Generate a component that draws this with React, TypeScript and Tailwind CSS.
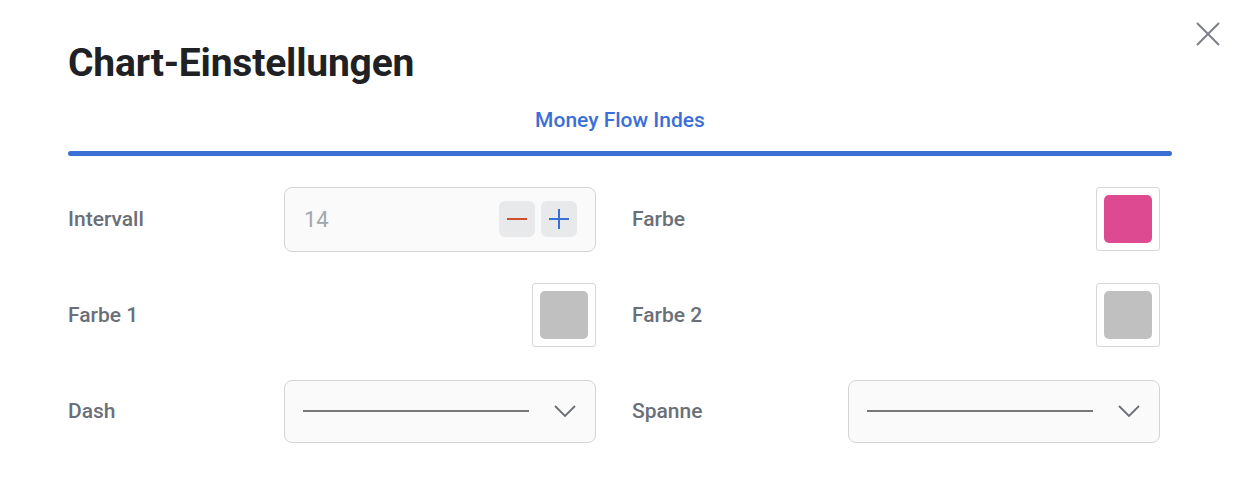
import React from "react";

const font = { fontFamily: "Roboto, 'Noto Sans', sans-serif" };

function Label({ children }: { children: React.ReactNode }) {
  return <span className="text-[21px] font-medium text-[#6b6f78] leading-none">{children}</span>;
}

function Swatch({ color }: { color: string }) {
  return (
    <div className="w-16 h-16 border border-[#d6d6d6] rounded-[3px] bg-white flex items-center justify-center">
      <div className="w-12 h-12 rounded-[5px]" style={{ background: color }} />
    </div>
  );
}

function LineSelect() {
  return (
    <div className="w-[312px] h-[63px] rounded-lg border border-[#d3d4d8] bg-[#fafafa] flex items-center pl-[18px] pr-[19px]">
      <div className="w-[226px] h-[2px] bg-[#777]" />
      <div className="flex-1" />
      <svg width="22" height="14" viewBox="0 0 22 14" fill="none">
        <path d="M1 2l10 10L21 2" stroke="#6b6f78" strokeWidth="1.8" />
      </svg>
    </div>
  );
}

export default function App() {
  return (
    <div className="w-[1242px] h-[498px] bg-white relative" style={font}>
      <button className="absolute left-[1196px] top-[22px] w-6 h-6">
        <svg width="24" height="24" viewBox="0 0 24 24" fill="none">
          <path d="M1 1l22 22M23 1L1 23" stroke="#7b7f88" strokeWidth="2" />
        </svg>
      </button>
      <div className="pl-[68px] pr-[70px] pt-[40px]">
        <h1 className="text-[39px] font-bold text-[#202124] leading-[46px] tracking-[-0.2px]">Chart-Einstellungen</h1>
        <div className="mt-[22px] flex flex-col items-center">
          <span className="text-[21px] font-medium text-[#3b6fd6] leading-[24px]">Money Flow Indes</span>
          <div className="mt-[19px] w-full h-[5px] rounded-full bg-[#3b6fd6]" />
        </div>
        <div className="mt-[31px] pr-3 grid grid-cols-2 gap-x-9 gap-y-8">
          <div className="flex items-center justify-between h-16">
            <Label>Intervall</Label>
            <div className="w-[312px] h-[65px] rounded-lg border border-[#d3d4d8] bg-[#fafafa] flex items-center pl-[19px] pr-[18px]">
              <span className="text-[22px] text-[#a2a6ad]">14</span>
              <div className="flex-1" />
              <div className="flex gap-[6px]">
                <div className="w-9 h-9 rounded-md bg-[#e8e9eb] flex items-center justify-center">
                  <div className="w-5 h-[2px] bg-[#d0502a]" />
                </div>
                <div className="w-9 h-9 rounded-md bg-[#e8e9eb] flex items-center justify-center">
                  <svg width="20" height="20" viewBox="0 0 20 20">
                    <path d="M0 10h20M10 0v20" stroke="#3b6fd6" strokeWidth="2" />
                  </svg>
                </div>
              </div>
            </div>
          </div>
          <div className="flex items-center justify-between h-16">
            <Label>Farbe</Label>
            <Swatch color="#de4a91" />
          </div>
          <div className="flex items-center justify-between h-16">
            <Label>Farbe 1</Label>
            <Swatch color="#c0c0c0" />
          </div>
          <div className="flex items-center justify-between h-16">
            <Label>Farbe 2</Label>
            <Swatch color="#c0c0c0" />
          </div>
          <div className="flex items-center justify-between h-16">
            <Label>Dash</Label>
            <LineSelect />
          </div>
          <div className="flex items-center justify-between h-16">
            <Label>Spanne</Label>
            <LineSelect />
          </div>
        </div>
      </div>
    </div>
  );
}
